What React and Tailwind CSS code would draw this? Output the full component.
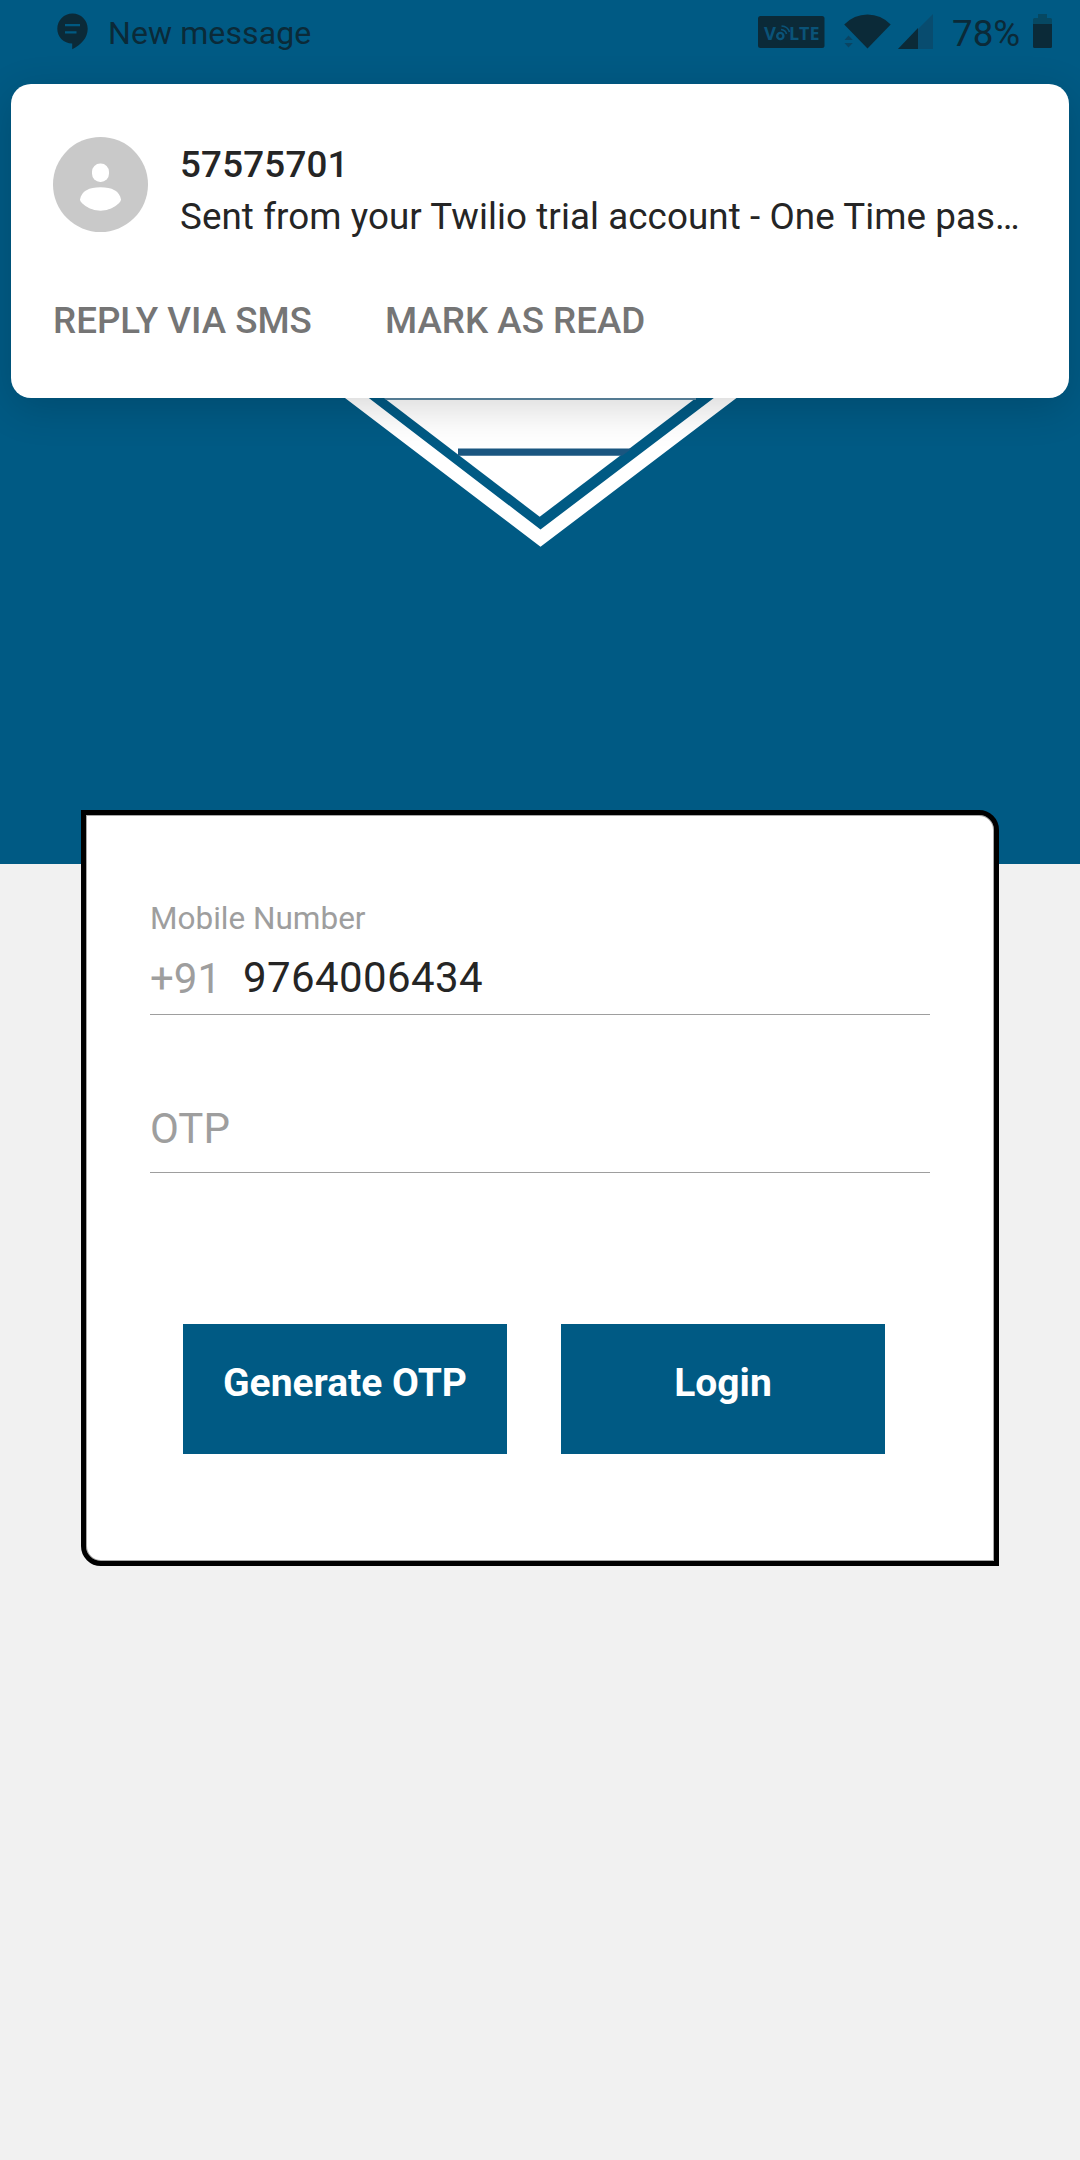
function VolteIcon() {
  return (
    <svg className="mt-[16px] h-[32px] w-[67px]" viewBox="0 0 67 32">
      <rect width="66.500" height="32" rx="2.500" fill="#0b2a38" />
      <g fill="#0a5378" fontFamily="Open Sans, sans-serif" fontWeight="700">
        <text x="6" y="24" fontSize="18.500" textLength="12" lengthAdjust="spacingAndGlyphs">V</text>
        <text x="31" y="24" fontSize="18.500" textLength="30.500" lengthAdjust="spacingAndGlyphs">LTE</text>
      </g>
      <g fill="none" stroke="#0a5378">
        <circle cx="22.300" cy="20" r="3.100" strokeWidth="2.400" />
        <path d="M23 13.500q4.500 .5 5.500 4.500M23.500 10q6.500 .5 8 6" strokeWidth="1.600" />
      </g>
    </svg>
  );
}

function Logo() {
  return (
    <svg className="mx-auto block h-[150px] w-[396px]" viewBox="342 398 396 150">
      <path d="M345 398H368.800L540.500 529.500L713.800 398H736.500L540.500 546.800Z" fill="#fff" />
      <path d="M386 399.500H694L539.700 516.800Z" fill="#fff" />
      <path d="M384 398H696V400H386Z" fill="#5f8aa5" />
      <path d="M458 448.500H632L622 455.800H458Z" fill="#1a5680" />
    </svg>
  );
}

function Notification() {
  return (
    <div className="relative z-10 mx-[11px] h-[314px] rounded-[20px] bg-white px-[42px] pt-[53px] shadow-[0_10px_40px_rgba(0,0,0,0.16)]">
      <div className="flex">
        <svg className="h-[95px] w-[95px]" viewBox="0 0 95 95">
          <circle cx="47.500" cy="47.500" r="47.500" fill="#c9c9c9" />
          <rect x="39" y="26.500" width="17" height="18.500" rx="8.200" fill="#fff" />
          <path d="M27 62.500C28.500 54 36 50.300 47.500 50.300S66.500 54 68 62.500C68.200 65.500 59 73.700 47.500 73.700S26.800 65.500 27 62.500Z" fill="#fff" />
        </svg>
        <div className="ml-[32px] pt-[2px] text-[36.750px] leading-[52px] text-[#252525]">
          <div className="font-medium tracking-[0.200px]">57575701</div>
          <div className="whitespace-nowrap tracking-[0.080px]">Sent from your Twilio trial account - One Time pas…</div>
        </div>
      </div>
      <div className="mt-[52px] flex text-[36.750px] font-medium leading-[52px] text-[#757575]">
        <span className="w-[332px]">REPLY VIA SMS</span>
        <span>MARK AS READ</span>
      </div>
    </div>
  );
}

function StatusBar() {
  return (
    <div className="flex h-[84px] items-start text-[#0b2a38]">
      <svg className="ml-[57px] mt-[13px] h-[37px] w-[31px]" viewBox="0 0 31 37" fill="none">
        <path d="M15.500 .5C7 .5 .3 7.300 .3 15.800c0 8.200 6.400 14.700 14.900 14.700v5.700C24 32 30.700 25 30.700 15.800 30.700 7.300 24 .5 15.500 .5Z" fill="currentColor" />
        <path d="M8 12.200h15M8 19.300h11.500" stroke="#005a82" strokeWidth="2.300" />
      </svg>
      <span className="ml-[20px] mt-[13px] whitespace-nowrap text-[32px] leading-[40px] tracking-[0.100px]">New message</span>
      <div className="ml-auto mr-[28px] flex">
        <VolteIcon />
        <svg className="ml-[18px] mt-[14px] h-[36px] w-[49px]" viewBox="0 0 49 36">
          <path d="M1.200 10.500Q11 .5 24.500 .5T47.700 10.500L24.500 34.500Z" fill="currentColor" />
          <path d="M1.500 26L5.500 21.500L9.800 26ZM1.500 29L5.500 33.500L9.800 29Z" fill="#0a4563" />
        </svg>
        <svg className="ml-[6px] mt-[14px] h-[35px] w-[35px]" viewBox="0 0 35 35">
          <path d="M0 35L35 0V35Z" fill="#084c6f" />
          <path d="M0 35L20 14V35Z" fill="currentColor" />
        </svg>
        <span className="ml-[19px] mt-[11px] w-[68px] whitespace-nowrap text-[36.750px] leading-[46px]">78%</span>
        <svg className="ml-[13px] mt-[14px] h-[34px] w-[19px]" viewBox="0 0 19 34">
          <path d="M5 0H14V4H17.500Q19 4 19 5.500V10H0V5.500Q0 4 1.500 4H5Z" fill="#064862" />
          <path d="M0 10H19V32.500Q19 34 17.500 34H1.500Q0 34 0 32.500Z" fill="currentColor" />
        </svg>
      </div>
    </div>
  );
}

function LoginForm() {
  return (
    <div className="relative mx-auto -mt-[54px] h-[756px] w-[918px] rounded-bl-[20px] rounded-tr-[20px] border-[5px] border-black bg-white px-[64px] pt-[82px] shadow-[inset_0_0_0_1px_#a8a8a8]">
      <div className="h-[118px] border-b border-[#9e9e9e] pt-px">
        <div className="text-[31.500px] leading-[42px] text-[#9e9e9e]">Mobile Number</div>
        <div className="flex pt-[12px] text-[42px] leading-[52px]">
          <span className="mt-px w-[93px] text-[#9e9e9e]">+91</span>
          <span className="tracking-[0.400px] text-[#252525]">9764006434</span>
        </div>
      </div>
      <div className="h-[158px] border-b border-[#9e9e9e] pt-[88px] text-[42px] leading-[52px] text-[#9e9e9e]">OTP</div>
      <div className="mx-[33px] mt-[151px] flex gap-[54px]">
        <button className="h-[130px] w-[324px] bg-[#005a84] pb-[12px] text-[39px] font-bold text-white">Generate OTP</button>
        <button className="h-[130px] w-[324px] bg-[#005a84] pb-[12px] text-[39px] font-bold text-white">Login</button>
      </div>
    </div>
  );
}

export default function App() {
  return (
    <div className="h-[2160px] w-[1080px] overflow-hidden bg-[#f1f1f1] font-[Roboto,sans-serif]">
      <div className="h-[864px] bg-[#005a84]">
        <StatusBar />
        <Notification />
        <Logo />
      </div>
      <LoginForm />
    </div>
  );
}
